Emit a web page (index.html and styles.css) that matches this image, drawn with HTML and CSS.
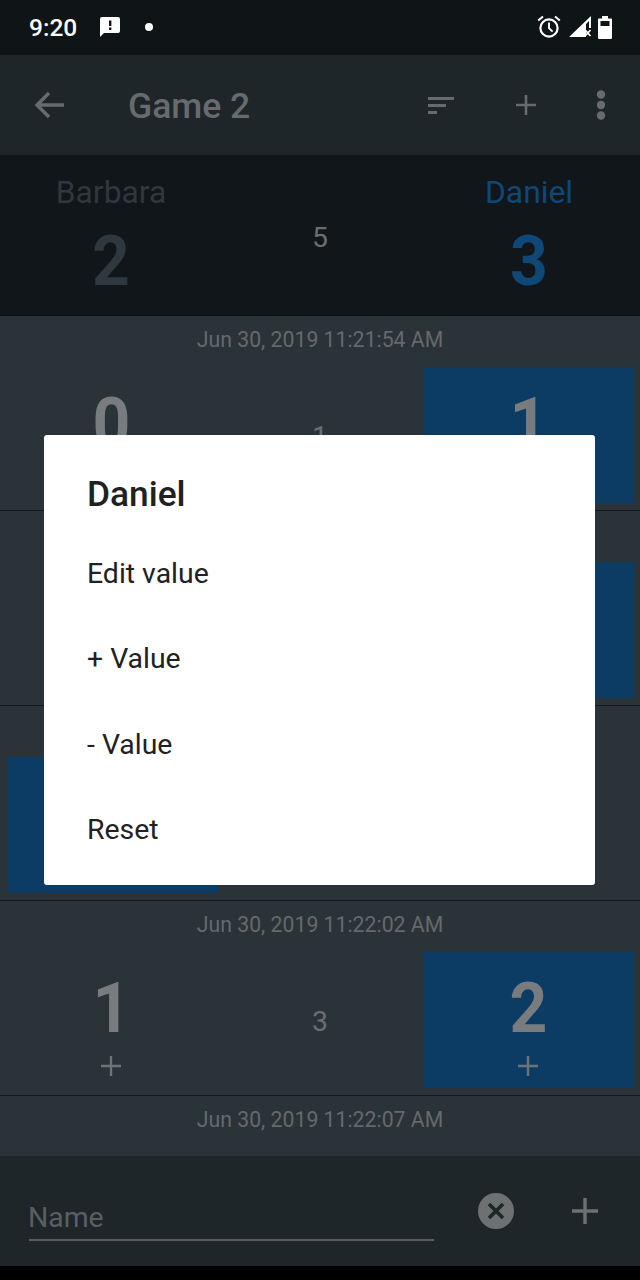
FILE: index.html
```html
<!DOCTYPE html>
<html lang="en">
<head>
<meta charset="utf-8">
<title>Game 2</title>
<link rel="stylesheet" href="styles.css">
</head>
<body>
<div class="screen">
  <header class="status">
    <div class="status-left">
      <span class="time">9:20</span>
      <svg class="ic-msg" width="20" height="20" viewBox="0 0 20 20"><path fill="#fff" d="M2 0h16a2 2 0 0 1 2 2v12a2 2 0 0 1-2 2H4l-4 4V2a2 2 0 0 1 2-2z"/><rect x="9" y="3.5" width="2.4" height="5.5" fill="#0f1416"/><rect x="9" y="10.5" width="2.4" height="2.4" fill="#0f1416"/></svg>
      <span class="dot"></span>
    </div>
    <div class="status-right">
      <svg width="24" height="24" viewBox="0 0 24 24"><circle cx="12" cy="13" r="8.6" fill="none" stroke="#fff" stroke-width="2.2"/><path d="M12 7.5V13.2l3.6 3.4" fill="none" stroke="#fff" stroke-width="1.9"/><path d="M1.2 5.6 6 1.6M22.8 5.6 18 1.6" fill="none" stroke="#fff" stroke-width="2"/></svg>
      <svg width="23" height="22" viewBox="0 0 23 22"><path fill="#fff" d="M0 21 22 0v12h-2V5l-3 3v13z"/><path fill="#fff" d="M15.500 14.500l1.200-1 2.100 2.200 2.100-2.200 1.200 1-2.200 2.500 2.200 2.500-1.200 1-2.100-2.200-2.100 2.200-1.200-1 2.200-2.500z"/></svg>
      <svg width="14" height="23" viewBox="0 0 14 23"><path fill="#fff" d="M4 0h6v2.500h3a1 1 0 0 1 1 1V22a1 1 0 0 1-1 1H1a1 1 0 0 1-1-1V3.500a1 1 0 0 1 1-1h3z"/><rect x="2.500" y="5" width="9" height="5" fill="#0f1416"/></svg>
    </div>
  </header>

  <nav class="toolbar">
    <svg class="back" width="32" height="28" viewBox="0 0 32 28"><path d="M30 14H3M15 2 3 14l12 12" fill="none" stroke="#686b6d" stroke-width="3.400"/></svg>
    <h1 class="title">Game 2</h1>
    <svg class="t-sort" width="26" height="18" viewBox="0 0 26 18"><path fill="#686b6d" d="M0 0h26v3H0zM0 7h18v3H0zM0 14h9v3H0z"/></svg>
    <svg class="t-plus" width="20" height="20" viewBox="0 0 20 20"><path fill="#686b6d" d="M8.700 0h2.600v8.700H20v2.600h-8.700V20H8.700v-8.700H0V8.700h8.700z"/></svg>
    <svg class="t-more" width="10" height="30" viewBox="0 0 10 30"><circle cx="5" cy="4.500" r="4.200" fill="#686b6d"/><circle cx="5" cy="15" r="4.200" fill="#686b6d"/><circle cx="5" cy="25.500" r="4.200" fill="#686b6d"/></svg>
  </nav>

  <section class="summary">
    <div class="player">
      <div class="p-name">Barbara</div>
      <div class="p-score">2</div>
    </div>
    <div class="total">5</div>
    <div class="player blue">
      <div class="p-name">Daniel</div>
      <div class="p-score">3</div>
    </div>
  </section>

  <main class="list">
    <article class="round">
      <div class="date">Jun 30, 2019 11:21:54 AM</div>
      <div class="cells">
        <div class="cell"><span class="num">0</span></div>
        <div class="sum">1</div>
        <div class="cell on"><span class="num">1</span></div>
      </div>
    </article>
    <article class="round">
      <div class="date"></div>
      <div class="cells">
        <div class="cell"></div>
        <div class="sum"></div>
        <div class="cell on"></div>
      </div>
    </article>
    <article class="round">
      <div class="date"></div>
      <div class="cells">
        <div class="cell on"></div>
        <div class="sum"></div>
        <div class="cell"></div>
      </div>
    </article>
    <article class="round">
      <div class="date">Jun 30, 2019 11:22:02 AM</div>
      <div class="cells">
        <div class="cell"><span class="num">1</span><svg class="plus" width="20" height="20" viewBox="0 0 20 20"><path d="M8.800 0h2.400v8.800H20v2.400h-8.800V20H8.800v-8.800H0V8.800h8.800z"/></svg></div>
        <div class="sum">3</div>
        <div class="cell on"><span class="num">2</span><svg class="plus" width="20" height="20" viewBox="0 0 20 20"><path d="M8.800 0h2.400v8.800H20v2.400h-8.800V20H8.800v-8.800H0V8.800h8.800z"/></svg></div>
      </div>
    </article>
    <article class="round">
      <div class="date">Jun 30, 2019 11:22:07 AM</div>
    </article>
  </main>

  <footer class="entry">
    <div class="field">Name</div>
    <svg class="clear" width="36" height="36" viewBox="0 0 36 36"><circle cx="18" cy="18" r="18" fill="#6e7172"/><path d="M11 11l14 14M25 11 11 25" stroke="#1e2629" stroke-width="3.600" fill="none"/></svg>
    <svg class="add" width="26" height="26" viewBox="0 0 26 26"><path fill="#6e7172" d="M11.300 0h3.400v11.300H26v3.400H14.700V26h-3.400V14.700H0v-3.400h11.300z"/></svg>
  </footer>
  <div class="navbar"></div>

  <div class="dialog">
    <h2 class="d-title">Daniel</h2>
    <div class="d-item">Edit value</div>
    <div class="d-item">+ Value</div>
    <div class="d-item">- Value</div>
    <div class="d-item">Reset</div>
  </div>
</div>
</body>
</html>
```
FILE: styles.css
```css
* { box-sizing: border-box; margin: 0; padding: 0; }
html, body { background: #000; }
body { font-family: Roboto, "Liberation Sans", sans-serif; }
.screen {
  position: relative;
  width: 640px;
  height: 1280px;
  display: flex;
  flex-direction: column;
  overflow: hidden;
}
.status {
  height: 55px;
  flex: none;
  background: #0f1416;
  display: flex;
  align-items: center;
  justify-content: space-between;
  padding: 0 28px 0 29px;
  color: #fff;
}
.status-left { display: flex; align-items: center; }
.time { font-size: 24.500px; font-weight: 500; width: 71px; }
.ic-msg { margin-top: -1px; }
.dot { width: 8px; height: 8px; border-radius: 50%; background: #fff; margin-left: 25px; margin-top: -1px; }
.status-right { display: flex; align-items: center; margin-top: -1px; }
.status-right svg:nth-child(2) { margin-left: 8px; }
.status-right svg:nth-child(3) { margin-left: 6px; }

.toolbar {
  height: 100px;
  flex: none;
  background: #1e2629;
  display: flex;
  align-items: center;
  padding-left: 34px;
}
.title { font-size: 35.500px; font-weight: 500; color: #686b6d; margin-left: 62px; flex: 1; line-height: 1; padding-top: 4px; }
.t-sort { margin-right: 62px; margin-top: 1px; }
.t-plus { margin-right: 60px; }
.t-more { margin-right: 34px; }

.summary {
  height: 161px;
  flex: none;
  background: #101619;
  display: grid;
  grid-template-columns: 210px 1fr 210px;
  padding: 0 6px;
  align-items: start;
  text-align: center;
  border-bottom: 1px solid #0b1012;
}
.player { color: #2e383e; padding-top: 19px; }
.player.blue { color: #0f4876; }
.p-name { font-size: 31.800px; line-height: 37px; }
.p-score { font-size: 71px; font-weight: 700; line-height: 84px; margin-top: 8px; transform: scaleX(.93); }
.total { font-size: 28.400px; color: #6b6e70; align-self: center; padding-top: 4px; }

.list { flex: 1; min-height: 0; overflow: hidden; background: #2a3338; }
.round { height: 195px; border-bottom: 1.500px solid #12181b; }
.date { height: 50.500px; text-align: center; color: #65696c; font-size: 21.250px; line-height: 48px; }
.cells {
  display: grid;
  grid-template-columns: 210px 1fr 210px;
  padding: 0 6px 0 8px;
}
.cell {
  height: 136px;
  display: flex;
  flex-direction: column;
  align-items: center;
  padding-right: 2px;
  color: #797c7e;
}
.cell:first-child { padding-right: 4px; }
.cell.on { background: #0c3c63; }
.num { font-size: 71px; font-weight: 700; line-height: 84px; margin-top: 14px; height: 84px; transform: scaleX(.93); }
.plus { fill: #6e7376; margin-top: 6px; }
.sum { align-self: center; text-align: center; font-size: 28.400px; color: #6b6e70; padding: 4px 2px 0 0; }

.entry {
  height: 110px;
  flex: none;
  background: #1e2629;
  display: flex;
  align-items: flex-start;
  padding-left: 29px;
}
.field {
  width: 405px;
  height: 85px;
  padding-top: 42px;
  font-size: 28.400px;
  line-height: 40px;
  color: #5a5f62;
  border-bottom: 2px solid #5a5e60;
  text-indent: -1px;
}
.clear { margin: 37px 0 0 44px; }
.add { margin: 42px 0 0 58px; }
.navbar { height: 14px; flex: none; background: #000; }

.dialog {
  position: absolute;
  left: 44px;
  top: 435px;
  width: 551px;
  height: 450px;
  background: #fff;
  border-radius: 3px;
  padding: 35px 43px 0;
  color: #212121;
}
.d-title { font-size: 35.300px; font-weight: 500; line-height: 48px; margin-bottom: 13px; }
.d-item { font-size: 28.400px; line-height: 85.400px; height: 85.400px; }
```
